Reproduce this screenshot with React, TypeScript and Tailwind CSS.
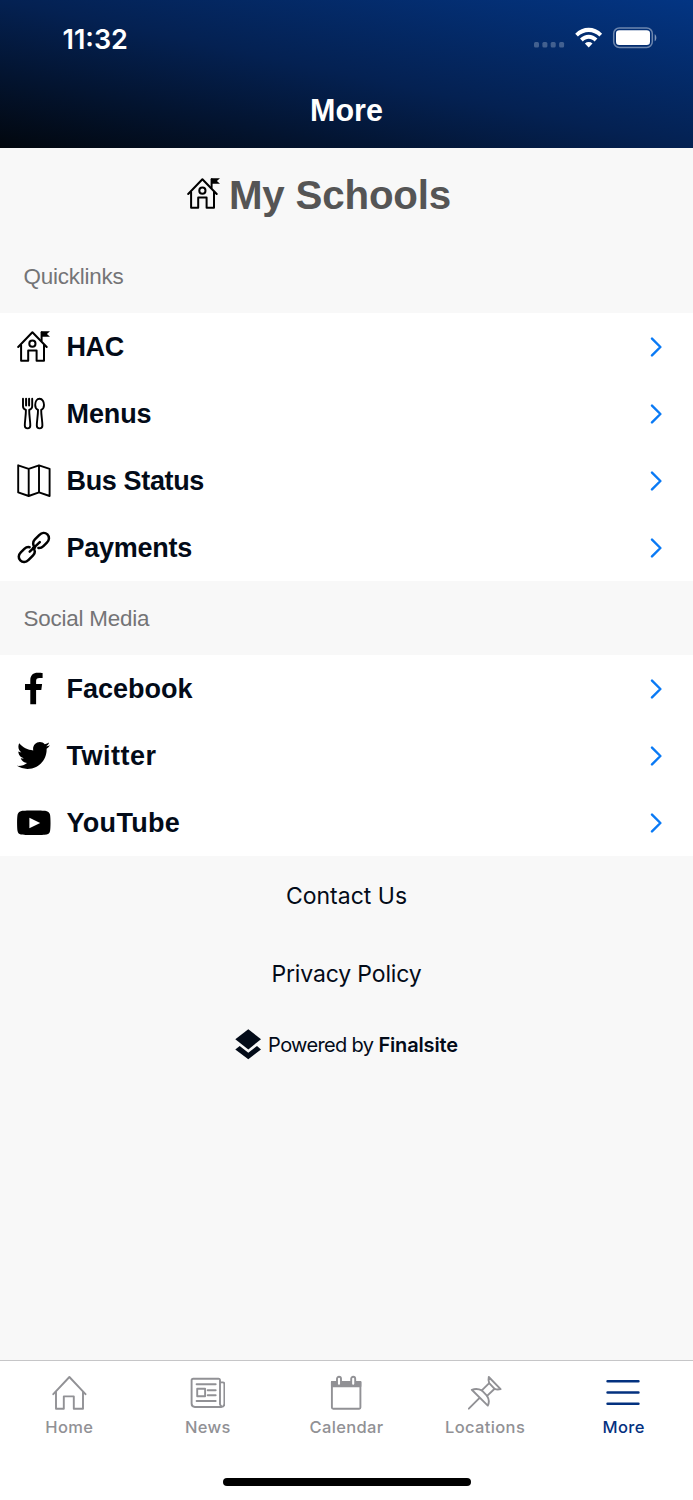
import type { ReactNode } from "react";
import { FaTwitter } from "react-icons/fa";

type LinkItem = { label: string; icon: ReactNode; tracking: string };

function SchoolIcon() {
  return (
    <svg className="w-[34px] h-[34px]" viewBox="0 0 34 34" fill="none" stroke="black" strokeWidth="2" strokeLinecap="round" strokeLinejoin="round" aria-hidden>
      <path d="M1.2 17 15.4 2.2 29.7 17" />
      <path d="M4.1 15.2V30.7H11.2V20.4H19.6V30.7H27V15.2" />
      <circle cx="15.4" cy="13.7" r="3.1" />
      <path d="M24.6 10.5V2.2" />
      <path d="M24.2 1.3H33L29.9 4 33 6.7H24.2Z" fill="black" stroke="none" />
    </svg>
  );
}

function MenusIcon() {
  return (
    <svg className="w-[34px] h-[34px]" viewBox="0 0 34 34" fill="none" stroke="black" strokeWidth="1.9" strokeLinecap="round" strokeLinejoin="round" aria-hidden>
      <path d="M6 1.8V9.2C6 11.2 7.2 12.2 8.9 12.9 9 18 7.8 24 7.8 28.6 7.8 30.6 8.8 31.4 10.6 31.4S13.3 30.6 13.3 28.6C13.3 24 12.1 18 12.2 12.9 14 12.2 15.2 11.2 15.2 9.2V1.8" />
      <path d="M9.1 1.8V8.4M12.1 1.8V8.4" strokeWidth="2" />
      <path d="M22.6 1.8C19.7 1.8 18.2 5 18.2 7.9 18.2 10.2 19.3 12 21 12.9 21.1 18 19.8 24 19.8 28.6 19.8 30.6 20.8 31.4 22.6 31.4S25.4 30.6 25.4 28.6C25.4 24 24.1 18 24.2 12.9 25.9 12 27 10.2 27 7.9 27 5 25.5 1.8 22.6 1.8Z" />
    </svg>
  );
}

function MapIcon() {
  return (
    <svg className="w-[34px] h-[34px]" viewBox="0 0 34 34" fill="none" stroke="black" strokeWidth="1.9" strokeLinejoin="round" aria-hidden>
      <path d="M1.2 1.3 11.7 4.8 22 1.3 32.6 4.8V32L22 28.4 11.7 32 1.2 28.4ZM11.7 4.8V32M22 1.3V28.4" />
    </svg>
  );
}

function ChainIcon() {
  return (
    <svg className="w-[34px] h-[34px]" viewBox="0 0 34 34" fill="none" stroke="black" strokeWidth="2.5" strokeLinecap="round" aria-hidden>
      <path d="M18 16.7C15.7 14.5 15.4 10.9 17.9 8.4L22.2 4.1C24.8 1.5 28.1 1.3 30.4 3.4 32.7 5.7 32.4 9.2 29.9 11.7L26.4 15.1C24.9 16.6 23.2 17.2 21.4 17" />
      <path d="M16 16.8C18.3 19 18.5 22 16.1 24.4L11.6 28.9C9 31.4 5.5 31.6 3.3 29.4 1.1 27.2 1.3 23.8 3.8 21.3L7.6 17.6C9.1 16.2 10.9 15.7 12.6 16.2" />
      <path d="M12.7 20.7 22.8 11.2" />
    </svg>
  );
}

function FacebookIcon() {
  return (
    <svg className="w-[34px] h-[34px]" viewBox="0 0 34 34" aria-hidden>
      <path d="M13.3 32.3V18H8V12.1H13.3V8C13.3 3.2 16.2.7 20.7.7 22.8.7 24.6.8 25.6 1V6.1H22.6C19.9 6.1 19.1 7.2 19.1 9V12.1H25.1L24.3 18H19.1V32.3Z" />
    </svg>
  );
}

function YouTubeIcon() {
  return (
    <svg className="w-[34px] h-[34px]" viewBox="0 0 34 34" aria-hidden>
      <path d="M16.8 4.6C9.5 4.6 5.4 4.8 3.8 5.2 2 5.7 1 6.8.6 8.5-.1 11.5-.1 22.3.6 25.2 1 27 2 28.1 3.8 28.5 6.7 29.2 27 29.2 29.8 28.5 31.5 28.1 32.6 27 33 25.2 33.7 22.3 33.7 11.5 33 8.5 32.6 6.8 31.5 5.7 29.8 5.2 28.2 4.8 24.1 4.6 16.8 4.6Z" />
      <path d="M12.4 11.7V22.2L23.2 17Z" fill="white" />
    </svg>
  );
}

const quicklinks: LinkItem[] = [
  { label: "HAC", icon: <SchoolIcon />, tracking: "tracking-[-0.4px]" },
  { label: "Menus", icon: <MenusIcon />, tracking: "tracking-[-0.1px]" },
  { label: "Bus Status", icon: <MapIcon />, tracking: "tracking-[-0.35px]" },
  { label: "Payments", icon: <ChainIcon />, tracking: "tracking-[-0.25px]" },
];

const social: LinkItem[] = [
  { label: "Facebook", icon: <FacebookIcon />, tracking: "" },
  { label: "Twitter", icon: <FaTwitter className="w-[33px] h-[33px]" aria-hidden />, tracking: "tracking-[0.5px]" },
  { label: "YouTube", icon: <YouTubeIcon />, tracking: "tracking-[0.3px]" },
];

function LinkList({ items }: { items: LinkItem[] }) {
  return (
    <ul className="bg-white text-black">
      {items.map((item) => (
        <li key={item.label} className="flex items-center h-[67px] pl-[17px] pr-[30px]">
          <span className="w-[34px] shrink-0">{item.icon}</span>
          <span className={`ml-[15.5px] pt-[2px] flex-1 text-[27px] leading-none font-bold text-[#030b18] ${item.tracking}`}>
            {item.label}
          </span>
          <svg className="w-[14px] h-5" viewBox="0 0 14 20" fill="none" stroke="#0a7af5" strokeWidth="2.4" strokeLinecap="round" strokeLinejoin="round" aria-hidden>
            <path d="M3 1.6 11.4 10 3 18.4" />
          </svg>
        </li>
      ))}
    </ul>
  );
}

function SectionTitle({ children }: { children: ReactNode }) {
  return (
    <h2 className="flex items-center h-[74px] pt-[2px] pl-[23.5px] text-[22.4px] tracking-[-0.2px] text-[#747476]">{children}</h2>
  );
}

const tabs = [
  {
    label: "Home",
    icon: (
      <>
        <path d="M1.3 19.2 17.4 2 33.5 19.2" />
        <path d="M4 17V33.7H11.8V21.4H21.8V33.7H31V17" />
      </>
    ),
  },
  {
    label: "News",
    icon: (
      <g transform="translate(.7 0)">
        <path d="M29.3 29.3V5.3C29.3 4.3 28.8 3.8 27.8 3.8H2.4C1.4 3.8.9 4.3.9 5.3V28.6C.9 31 2 32 4.2 32H30.5C32.6 32 33.7 30.9 33.7 28.8V9C33.7 8 33 7.4 32 7.4H29.3M29.3 28.8C29.3 30.2 30 31 31 31.3" />
        <path d="M6.5 13.8H14.4V21.3H6.5ZM5.9 9.3H25M17 15.3H25M17 20.3H25M5.9 26H25" />
      </g>
    ),
  },
  {
    label: "Calendar",
    icon: (
      <>
        <path d="M2.9 7H31.4V32.5Q31.4 33.7 30.2 33.7H4.2Q2.9 33.7 2.9 32.5Z" />
        <path d="M2.9 7H31.4V11.2H2.9Z" fill="currentColor" />
        <rect x="8" y="1.8" width="4" height="9" rx="2" fill="white" />
        <rect x="22.2" y="1.8" width="4" height="9" rx="2" fill="white" />
      </>
    ),
  },
  {
    label: "Locations",
    icon: (
      <g transform="translate(-.4 0)">
        <path d="M21.2 2 33 14.1C30.5 14.7 28.5 14.5 27 13.8L21.6 8.1C20.8 6.3 20.7 4.2 21.2 2Z" />
        <path d="M21.6 8.1 14.2 15.4M27 13.8 19.5 20.9M14.2 15.4 19.5 20.9" />
        <path d="M14.2 15.4C11 13.7 7.5 13.6 4.2 14.8L20.2 30.6C21.8 27.3 21.4 23.8 19.5 20.9M12 22.8 1.2 33.7" />
      </g>
    ),
  },
  {
    label: "More",
    icon: <path d="M1.6 6.3H32.4M1.6 17.5H32.4M1.6 28.7H32.4" strokeWidth="2.6" />,
  },
];

function StatusBar() {
  return (
    <div className="flex items-center justify-between h-[76px] pl-[62.5px] pr-[36px] font-[Inter,sans-serif]">
      <span className="pt-[2px] text-[27px] leading-none font-semibold">11:32</span>
      <svg className="w-[124px] h-6" viewBox="0 0 124 24" fill="white" aria-hidden>
        <g transform="translate(0 .6)">
          <g opacity="0.25">
            <rect x="1" y="15.5" width="5" height="5.5" rx="1.5" />
            <rect x="9.4" y="15.5" width="5" height="5.5" rx="1.5" />
            <rect x="17.7" y="15.5" width="5" height="5.5" rx="1.5" />
            <rect x="26.1" y="15.5" width="5" height="5.5" rx="1.5" />
          </g>
          <path d="M42.2 7.1C49.7-.7 61.6-.7 69.1 7.1L66.4 9.9C60.4 3.9 50.9 3.9 44.9 9.9Z" />
          <path d="M47 12C52 6.9 59.4 6.9 64.4 12L61.6 14.8C58.1 11.4 53.3 11.4 49.8 14.8Z" />
          <path d="M51.9 16.8C54.1 15 57.3 15 59.5 16.8L55.7 20.9Z" />
          <rect x="80.7" y="1.4" width="38.6" height="19.4" rx="5.6" fill="none" stroke="white" strokeOpacity="0.42" strokeWidth="1.5" />
          <rect x="83" y="3.7" width="34" height="14.7" rx="3.3" />
          <path d="M121.7 7.6C123.9 8.8 123.9 13.4 121.7 14.6Z" opacity="0.5" />
        </g>
      </svg>
    </div>
  );
}

export default function App() {
  return (
    <div className="flex flex-col w-full h-[1500px] bg-[#f8f8f8] overflow-hidden whitespace-nowrap font-['Liberation_Sans',Arial,sans-serif]">
      <header className="h-[147.5px] shrink-0 text-white [background-image:linear-gradient(to_top_right,#02070e,#042152_50%,#033583)]">
        <StatusBar />
        <h1 className="pt-[17px] text-center text-[30.5px] leading-[35px] font-bold">More</h1>
      </header>

      <main className="flex-1">
        <div className="flex h-[91.5px] pl-[187px]">
          <div className="pt-[29px]">
            <SchoolIcon />
          </div>
          <p className="ml-[8px] pt-[25px] text-[40.3px] leading-[46px] font-bold tracking-[-0.2px] text-[#555]">My Schools</p>
        </div>

        <SectionTitle>Quicklinks</SectionTitle>
        <LinkList items={quicklinks} />
        <SectionTitle>Social Media</SectionTitle>
        <LinkList items={social} />

        <div className="flex flex-col items-center text-[#030b18] font-[Inter,sans-serif]">
          <a className="mt-[25px] text-[23px] leading-[30px]">Contact Us</a>
          <a className="mt-[48px] text-[23px] leading-[30px] tracking-[-0.15px]">Privacy Policy</a>
          <div className="mt-[40px] flex items-center">
            <svg className="w-[27px] h-[31px]" viewBox="0 0 27 31" fill="currentColor" aria-hidden>
              <path d="M13.3.3 26 10.3 13.3 20.4.3 10.3Z" />
              <path d="M.3 20.4 4.7 17 13.3 23.8 22 17 26 20.4 13.3 30.3Z" />
            </svg>
            <p className="ml-[6px] text-[20px] leading-[30px] tracking-[-0.65px]">
              Powered by <span className="font-semibold tracking-[-0.15px]">Finalsite</span>
            </p>
          </div>
        </div>
      </main>

      <nav className="h-[140px] shrink-0 border-t border-[#c6c6c8] bg-white font-[Inter,sans-serif]">
        <ul className="grid grid-cols-5 h-[117px] pt-[14px]">
          {tabs.map((tab) => (
            <li
              key={tab.label}
              className={`flex flex-col items-center ${tab.label === "More" ? "text-[#03317f]" : "text-[#919195]"}`}
            >
              <svg className="w-[35px] h-[35px]" viewBox="0 0 35 35" fill="none" stroke="currentColor" strokeWidth="1.9" strokeLinecap="round" strokeLinejoin="round" aria-hidden>
                {tab.icon}
              </svg>
              <span className="mt-[7px] text-[16.5px] leading-5 font-medium tracking-[0.35px]">{tab.label}</span>
            </li>
          ))}
        </ul>
        <div className="mx-auto w-[248px] h-[8px] rounded-full bg-black" />
      </nav>
    </div>
  );
}
